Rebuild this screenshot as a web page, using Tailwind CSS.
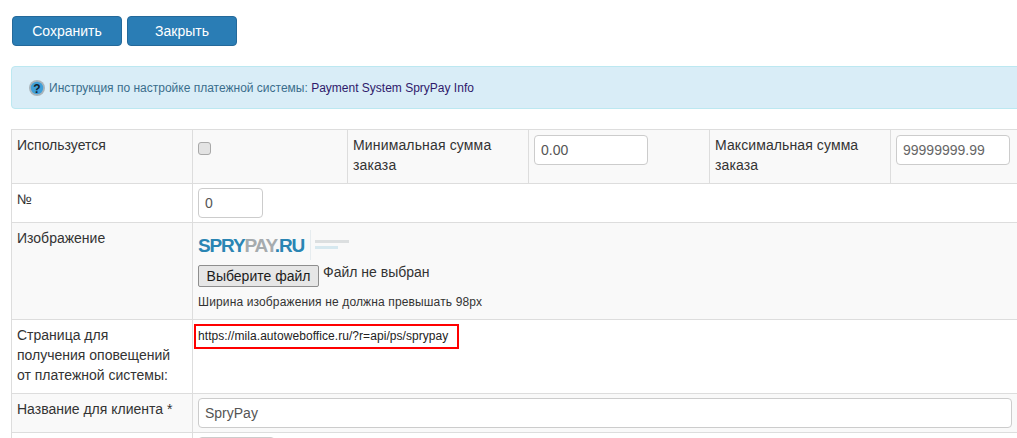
<!DOCTYPE html>
<html>
  <head>
    <meta charset="UTF-8" />
    <title>Payment System SpryPay</title>
    <script src="https://cdn.jsdelivr.net/npm/@tailwindcss/browser@4"></script>
  </head>
  <body class="bg-white h-[438px] w-[1017px] overflow-hidden font-['Liberation_Sans',Arial,sans-serif] text-[14px] leading-[20px] text-[#333]">

    <div class="flex gap-[5px] pl-3 pt-4">
      <button class="w-[110px] h-[30px] bg-[#2a7db5] border border-[#24699a] rounded-[4px] text-white text-[14px]">Сохранить</button>
      <button class="w-[110px] h-[30px] bg-[#2a7db5] border border-[#24699a] rounded-[4px] text-white text-[14px]">Закрыть</button>
    </div>

    <div class="ml-[11px] mt-5 h-[43px] w-[1010px] flex items-center gap-[4px] pl-[17px] pt-[1px] bg-[#d9edf7] border border-[#bce8f1] rounded-[4px] text-[12px] text-[#3a6d8c]">
      <svg class="w-4 h-4 shrink-0" viewBox="0 0 16 16">
        <circle cx="8" cy="8" r="8" fill="#a9b4ba" />
        <circle cx="8" cy="8" r="6.2" fill="#3f9fd8" />
        <text x="8" y="12.5" text-anchor="middle" font-size="12" font-weight="700" fill="#12222e" font-family="Liberation Sans">?</text>
      </svg>
      <span>Инструкция по настройке платежной системы: <a class="text-[#2f1a6b]">Payment System SpryPay Info</a></span>
    </div>

    <table class="ml-[11px] mt-5 w-[1026px] table-fixed border-collapse">
      <colgroup>
        <col class="w-[181px]" />
        <col class="w-[155px]" />
        <col class="w-[181px]" />
        <col class="w-[181px]" />
        <col class="w-[181px]" />
        <col class="w-[147px]" />
      </colgroup>
      <tr class="h-[54px] bg-[#f9f9f9]">
        <td class="border border-[#ddd] pl-[5px] pr-1.5 py-[5px] align-top">Используется</td>
        <td class="border border-[#ddd] pl-[5px] pr-1.5 py-[5px] align-top">
          <span class="block mt-[7px] w-[13px] h-[13px] bg-[#e3e3e3] border border-[#a9a9a9] rounded-[3px]"></span>
        </td>
        <td class="border border-[#ddd] pl-[5px] pr-1.5 py-[5px] align-top tracking-[0.15px]">Минимальная сумма заказа</td>
        <td class="border border-[#ddd] pl-[5px] pr-1.5 py-[5px] align-top">
          <div class="w-[114px] h-[30px] flex items-center px-1.5 bg-white border border-[#ccc] rounded-[4px] text-[#555]">0.00</div>
        </td>
        <td class="border border-[#ddd] pl-[5px] pr-1.5 py-[5px] align-top tracking-[0.1px]">Максимальная сумма заказа</td>
        <td class="border border-[#ddd] pl-[5px] pr-1.5 py-[5px] align-top">
          <div class="w-[114px] h-[30px] flex items-center px-1.5 bg-white border border-[#ccc] rounded-[4px] text-[#666]">99999999.99</div>
        </td>
      </tr>
      <tr class="h-[39px]">
        <td class="border border-[#ddd] pl-[5px] pr-1.5 py-[5px] align-top">№</td>
        <td colspan="5" class="border border-[#ddd] pl-[5px] pr-1.5 py-[4px] align-top">
          <div class="w-[65px] h-[30px] flex items-center px-1.5 bg-white border border-[#ccc] rounded-[4px] text-[#555]">0</div>
        </td>
      </tr>
      <tr class="h-[97px] bg-[#f9f9f9]">
        <td class="border border-[#ddd] pl-[5px] pr-1.5 py-[5px] align-top">Изображение</td>
        <td colspan="5" class="border border-[#ddd] pl-[5px] pr-1.5 py-[5px] align-top">
          <div class="flex items-center h-[31px] mt-[1px]">
            <span class="w-[107px] whitespace-nowrap pt-[2px] text-[19px] leading-[22px] font-bold tracking-[-1.15px] text-[#2a85b3]">SPRY<span class="text-[#a6abae]">PAY</span><span class="text-[#2a85b3]">.RU</span></span>
            <span class="ml-[5px] w-px h-[30px] bg-[#e6ecef]"></span>
            <span class="ml-[4px] flex flex-col gap-[3px]">
              <span class="block w-[34px] h-[3px] bg-[#dcdfe0]"></span>
              <span class="block w-[23px] h-[3px] bg-[#d6e8ef]"></span>
            </span>
          </div>
          <div class="flex items-start mt-[2px] h-[25px]">
            <button class="w-[121px] h-[22px] mt-[3px] bg-[#e6e6e6] border border-[#8e8e8e] rounded-[2px] text-[14px] leading-[18px] text-[#1c1c1c] font-['Liberation_Sans',sans-serif]">Выберите файл</button>
            <span class="ml-1 text-[#333]">Файл не выбран</span>
          </div>
          <div class="mt-[7px] text-[12px] leading-[17px] tracking-[0.14px]">Ширина изображения не должна превышать 98px</div>
        </td>
      </tr>
      <tr class="h-[74px]">
        <td class="border border-[#ddd] pl-[5px] pr-1.5 py-[5px] align-top">Страница для<br />получения оповещений<br />от платежной системы:</td>
        <td colspan="5" class="border border-[#ddd] pl-[1px] pr-[2px] py-[4px] align-top">
          <div class="w-[265px] h-[25px] flex items-center pl-[2px] pb-[2px] border-[2px] border-[#f00] text-[12px] tracking-[0.06px] text-[#222]">https://mila.autoweboffice.ru/?r=api/ps/sprypay</div>
        </td>
      </tr>
      <tr class="h-[39px] bg-[#f9f9f9]">
        <td class="border border-[#ddd] pl-[5px] pr-1.5 py-[5px] align-top">Название для клиента *</td>
        <td colspan="5" class="border border-[#ddd] pl-[5px] pr-1.5 py-[4px] align-top">
          <div class="w-[814px] h-[30px] flex items-center px-1.5 bg-white border border-[#ccc] rounded-[4px] text-[#555]">SpryPay</div>
        </td>
      </tr>
      <tr class="h-[39px]">
        <td class="border border-[#ddd] pl-[5px] pr-1.5 py-[5px] align-top"></td>
        <td colspan="5" class="border border-[#ddd] pl-[5px] pr-1.5 py-[4px] align-top">
          <div class="w-[77px] h-[30px] bg-white border border-[#ccc] rounded-[4px]"></div>
        </td>
      </tr>
    </table>

  </body>
</html>
